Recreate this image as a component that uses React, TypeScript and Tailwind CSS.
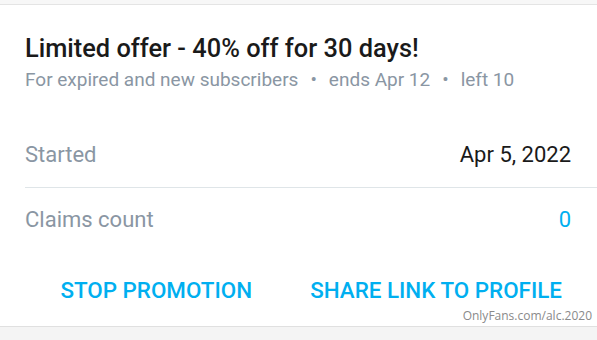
export default function App() {
  return (
    <div className="w-[597px] h-[340px] bg-[#f4f4f4] flex flex-col overflow-hidden font-['Roboto',sans-serif]">
      <div className="h-[5px] bg-[#f7f7f7] border-b border-[#e4e4e4] shrink-0" />
      <div className="bg-white flex flex-col border-b border-[#e0e0e0] h-[322px] shrink-0 relative">
        <div className="px-[25px] pt-[26px]">
          <h1 className="text-[25.4px] leading-[34px] font-medium text-[#1a1a1a]">Limited offer - 40% off for 30 days!</h1>
          <p className="text-[19px] leading-[26px] text-[#8a96a3] mt-[2px]">
            For expired and new subscribers<span className="mx-[12px]">•</span>ends Apr 12<span className="mx-[12px]">•</span>left 10
          </p>
        </div>
        <div className="pl-[25px] mt-[29px]">
          <div className="flex items-center justify-between pr-[26px] h-[66px] border-b border-[#dfe5e8]">
            <span className="text-[22px] text-[#8a96a3]">Started</span>
            <span className="text-[22px] text-[#1a1a1a]">Apr 5, 2022</span>
          </div>
          <div className="flex items-center justify-between pr-[26px] h-[62px]">
            <span className="text-[22px] text-[#8a96a3]">Claims count</span>
            <span className="text-[22px] text-[#00aff0]">0</span>
          </div>
        </div>
        <div className="flex justify-end gap-[58px] pr-[35px] mt-[27px]">
          <button className="text-[22.4px] leading-[26px] font-medium text-[#00aff0] uppercase">Stop promotion</button>
          <button className="text-[22.4px] leading-[26px] font-medium text-[#00aff0] uppercase">Share link to profile</button>
        </div>
        <span className="absolute right-[5px] bottom-[1px] text-[12px] text-[#8a8a8a] font-['Open_Sans',sans-serif]">OnlyFans.com/alc.2020</span>
      </div>
    </div>
  );
}
